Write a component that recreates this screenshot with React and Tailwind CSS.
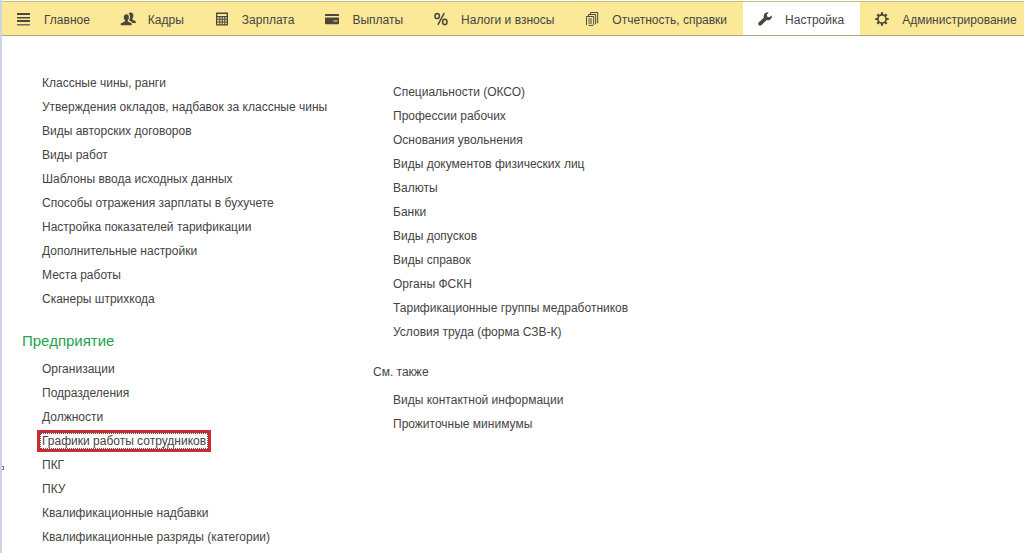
import React from "react";

const icons = {
  menu: (
    <g fill="currentColor">
      <rect x="0" y="1" width="13" height="2" />
      <rect x="0" y="5" width="13" height="1.5" />
      <rect x="0" y="8" width="13" height="2" />
      <rect x="0" y="12" width="13" height="1.5" opacity=".75" />
    </g>
  ),
  people: (
    <g fill="currentColor">
      <path d="M9.800.4c1.700 0 2.700 1.300 2.600 3.100 0 1.200-.4 2.200-1 2.900v1.200l2.700 1.300c.5.200.8.700.8 1.200v1h-3.500c-.3-.9-.9-1.400-1.700-1.800L8 8.500c.8-1.100 1.100-2.400 1-3.900-.1-1.300-.6-2.300-1.400-3C8.100.9 8.800.4 9.800.4z" />
      <path d="M5.400 2.200c1.700 0 2.600 1.300 2.500 3.100 0 1.300-.5 2.300-1.100 3v1.200l3 1.300c.6.300.9.800.9 1.500v.9H-.3v-1c0-.6.300-1 .8-1.300l3.400-1.400V8.300c-.7-.7-1.100-1.700-1.100-3 0-1.800 1-3.100 2.600-3.100z" />
    </g>
  ),
  calc: (
    <path fill="currentColor" fillRule="evenodd" d="M1 .5h12v13H1zM2.300 2v2h9.400V2zM2.300 5.200v1.500h2V5.200zM5.300 5.200v1.500h1.500V5.200zM7.800 5.200v1.500h1.500V5.200zM10.300 5.200v1.500h1.400V5.200zM2.300 7.700v1.700h2V7.700zM5.300 7.700v1.700h1.500V7.700zM7.800 7.700v1.700h1.500V7.700zM10.300 7.700v1.700h1.400V7.700zM2.300 10.400v1.900h2v-1.900zM5.300 10.400v1.900h1.500v-1.900zM7.800 10.400v1.900h1.500v-1.900zM10.300 10.400v1.900h1.400v-1.900z" />
  ),
  card: (
    <g fill="currentColor">
      <path d="M.8 2h12.400c.4 0 .8.300.8.800V4H0V2.800C0 2.300.4 2 .8 2z" />
      <path fillRule="evenodd" d="M0 5.500h14v6c0 .4-.3.800-.8.800H.8c-.5 0-.8-.4-.8-.8zM8.500 8.500v1h4v-1z" />
    </g>
  ),
  percent: (
    <g fill="none" stroke="currentColor" strokeWidth="1.500">
      <ellipse cx="3.200" cy="4" rx="2.200" ry="2.600" />
      <ellipse cx="10.800" cy="9.900" rx="2.200" ry="2.600" />
      <path d="M10.200 1.200 3.900 12.800" />
    </g>
  ),
  docs: (
    <g fill="none" stroke="currentColor" strokeWidth="1">
      <path d="M5.500 2V.5h7.200v10.700" />
      <path d="M3.500 4V2.500h7.200v9.700" />
      <path d="M1.500 13V4.500h7.200v8.200L8 13.400H3.500" />
      <path d="M3.200 7h3.800M3.200 9h3.800M3.200 11h3.800" />
    </g>
  ),
  wrench: (
    <path fill="currentColor" d="M10.600.4 8.800 2.700l.5 2 2 .5 2.500-1.800c.4 2.400-.8 4.300-2.900 4.800-.8.200-1.500.1-2.100-.1L3.500 13c-.7.800-1.900.9-2.700.2-.8-.7-.8-1.900-.1-2.700l5.200-4.900c-.3-.9-.3-1.700 0-2.600C6.600 1 8.400-.1 10.600.4z" />
  ),
  gear: (
    <g fill="none" stroke="currentColor">
      <circle cx="7" cy="7" r="4.100" strokeWidth="1.700" />
      <path strokeWidth="2.200" d="M7 .3v2.400M7 11.300v2.400M.3 7h2.400M11.300 7h2.400M2.300 2.300 4 4M10 10l1.700 1.700M11.700 2.300 10 4M4 10l-1.700 1.700" />
    </g>
  ),
};

const sections = [
  ["menu", "Главное"],
  ["people", "Кадры"],
  ["calc", "Зарплата"],
  ["card", "Выплаты"],
  ["percent", "Налоги и взносы"],
  ["docs", "Отчетность, справки"],
  ["wrench", "Настройка"],
  ["gear", "Администрирование"],
];

const general = [
  "Классные чины, ранги",
  "Утверждения окладов, надбавок за классные чины",
  "Виды авторских договоров",
  "Виды работ",
  "Шаблоны ввода исходных данных",
  "Способы отражения зарплаты в бухучете",
  "Настройка показателей тарификации",
  "Дополнительные настройки",
  "Места работы",
  "Сканеры штрихкода",
];

const company = [
  "Организации",
  "Подразделения",
  "Должности",
  "Графики работы сотрудников",
  "ПКГ",
  "ПКУ",
  "Квалификационные надбавки",
  "Квалификационные разряды (категории)",
];

const catalogs = [
  "Специальности (ОКСО)",
  "Профессии рабочих",
  "Основания увольнения",
  "Виды документов физических лиц",
  "Валюты",
  "Банки",
  "Виды допусков",
  "Виды справок",
  "Органы ФСКН",
  "Тарификационные группы медработников",
  "Условия труда (форма СЗВ-К)",
];

const seeAlso = ["Виды контактной информации", "Прожиточные минимумы"];

function LinkList({ items, selected }) {
  return (
    <ul className="pl-5">
      {items.map((item) => (
        <li key={item} className="flex h-6 items-center">
          {item === selected ? (
            <a
              href="#"
              aria-current="true"
              className="-ml-[5px] whitespace-nowrap border-3 border-[#cb2a35] leading-[14px]"
            >
              <span className="block border border-dotted border-[#555] px-px">{item}</span>
            </a>
          ) : (
            <a href="#" className="whitespace-nowrap leading-4">
              {item}
            </a>
          )}
        </li>
      ))}
    </ul>
  );
}

export default function App() {
  return (
    <div className="relative min-h-screen overflow-x-hidden border-l-2 border-[#ccd3e2] bg-white font-['Liberation_Sans',Arial,sans-serif] text-[12px] text-[#444]">
      <nav className="mt-px flex h-[35px] border-y border-t-[#c9bc7c] border-b-[#aaa488] bg-[#fbe998]">
        {sections.map(([icon, label]) => (
          <a
            key={label}
            href="#"
            aria-current={label === "Настройка" ? "page" : undefined}
            className={
              "flex shrink-0 items-center gap-[13px] whitespace-nowrap pl-[15px] pr-4 " +
              (label === "Настройка" ? "bg-white" : "")
            }
          >
            <svg aria-hidden="true" viewBox="0 0 14 14" className="h-3.5 w-3.5 shrink-0 overflow-visible text-[#4b473c]">
              {icons[icon]}
            </svg>
            <span className="pt-0.5 leading-4">{label}</span>
          </a>
        ))}
      </nav>
      <main className="grid grid-cols-[351px_1fr] pl-5">
        <div className="pt-[35px]">
          <LinkList items={general} />
          <section className="pt-[18px]">
            <h2 className="pb-1 text-[15px] leading-6 text-[#22a352]">Предприятие</h2>
            <LinkList items={company} selected="Графики работы сотрудников" />
          </section>
        </div>
        <div className="pt-11">
          <LinkList items={catalogs} />
          <section className="pt-4">
            <h2 className="pb-1 leading-6">См. также</h2>
            <LinkList items={seeAlso} />
          </section>
        </div>
      </main>
      <span aria-hidden="true" className="absolute left-0 top-[466px] h-1 w-0.5 border-y border-r border-[#777]" />
    </div>
  );
}
